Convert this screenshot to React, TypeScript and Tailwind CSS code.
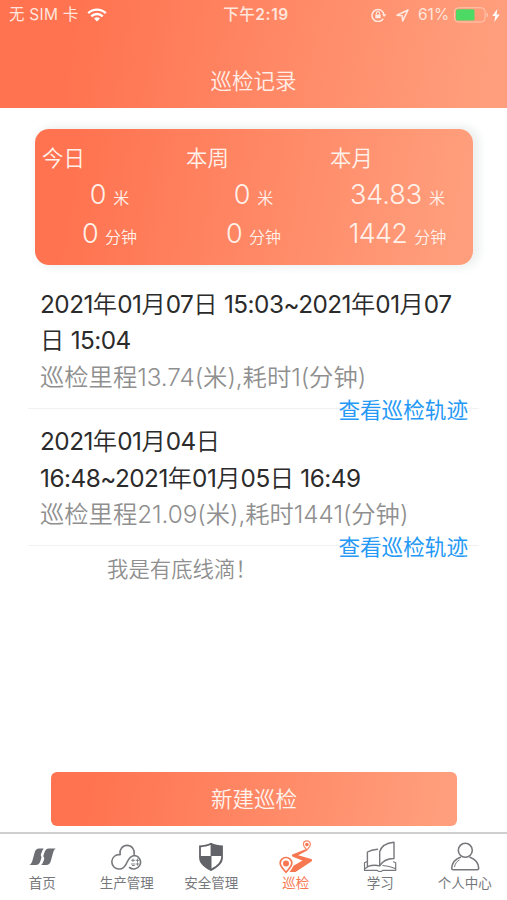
import React from "react";

const FONT = "font-['Inter','Noto_Sans_CJK_SC',sans-serif]";

// Latin runs are set slightly tighter than the Chinese characters around them.
function Mixed({ text, tight }: { text: string; tight: string }) {
  const parts = text.split(/([\x20-\x7e]+)/).filter(Boolean);
  return (
    <>
      {parts.map((p, i) =>
        /^[\x20-\x7e]+$/.test(p) ? (
          <span key={i} className={tight}>{p}</span>
        ) : (
          <span key={i}>{p}</span>
        )
      )}
    </>
  );
}

function StatusBar() {
  return (
    <div className="flex h-[30px] items-center text-[15.5px] leading-[30px] text-[#ffe5dc]">
      <div className="flex w-[200px] items-center pl-[9px]">
        <span className="whitespace-pre tracking-[0.25px]">无 SIM 卡</span>
        <svg width="20" height="14" viewBox="0 0 20 14" className="ml-[8px]" fill="none" stroke="white" strokeWidth="2.4">
          <path d="M1.2 5.2C6.2.4 13.8.4 18.8 5.2" />
          <path d="M4.3 8.3c3.2-3 8.2-3 11.4 0" />
          <path d="M7 10.4c1.8-1.5 4.2-1.5 6 0l-3 3z" fill="white" stroke="none" />
        </svg>
      </div>
      <div className="w-[112px] text-center tracking-[0.6px]">
        <span className="font-medium">下午</span>
        <span className="font-semibold">2:19</span>
      </div>
      <div className="flex flex-1 items-center justify-end pr-[7px]">
        <svg width="16" height="14" viewBox="0 0 16 14" fill="none" stroke="#ffe9e1" strokeWidth="1.5">
          <path d="M12.2 10.6A6 6 0 1 1 13 7" />
          <path d="M11 6.3h4.4L13.2 9z" fill="#ffe9e1" stroke="none" />
          <path d="M4.3 6.5h5.4v3.8H4.3z" fill="#ffe9e1" stroke="none" />
          <path d="M5.4 6.5V5.2a1.6 1.6 0 0 1 3.2 0v1.3" strokeWidth="1.1" />
        </svg>
        <svg width="13" height="13" viewBox="0 0 13 13" className="ml-[9px]" fill="none" stroke="#ffe9e1" strokeWidth="1.6" strokeLinejoin="round">
          <path d="M12 1 1 6.2l5.2.6.5 5.2z" />
        </svg>
        <span className="ml-[9px] w-[34px]">61%</span>
        <svg width="35" height="16" viewBox="0 0 35 16" className="ml-[2px]" fill="none">
          <rect x=".6" y=".8" width="30.5" height="14.2" rx="3.8" stroke="#ffc9b4" strokeWidth="1" />
          <rect x="2" y="2.3" width="18.5" height="11.2" rx="1.5" fill="#4cd964" />
          <path d="M32.6 5.5c1.9.5 1.9 4.3 0 4.8z" fill="#ffc9b4" />
        </svg>
        <svg width="8" height="13" viewBox="0 0 8 13" className="ml-[3px]" fill="white">
          <path d="M5.3 0 .3 7h3l-1 6L7.7 5.4H4.5z" />
        </svg>
      </div>
    </div>
  );
}

function Stat({ label, meters, minutes }: { label: string; meters: string; minutes: string }) {
  return (
    <div className="w-[144px] text-[#fff1ea]">
      <div className="h-[36px] pl-[7px] text-[21.4px] font-[350] leading-[36px]">{label}</div>
      <div className="h-[38.5px] pl-[5px] text-center text-[27px] font-[350] leading-[38px]">
        <span className="tracking-[-0.1px]">{meters}</span>
        <span className="ml-[7px] text-[16px] font-[350]">米</span>
      </div>
      <div className="h-[39px] pl-[5px] text-center text-[27px] font-[350] leading-[38px]">
        <span className="tracking-[-0.7px]">{minutes}</span>
        <span className="ml-[7px] text-[16px] font-[350]">分钟</span>
      </div>
    </div>
  );
}

function Entry({ lines, detail }: { lines: string[]; detail: string }) {
  return (
    <div className="relative mx-[28px] h-[137.5px] border-b border-[#f1f1f1] pl-[12px] pt-[14.5px] text-[24.3px] font-[350] leading-[36.5px]">
      {lines.map((l) => (
        <div key={l} className="whitespace-pre text-[#2b2b2b]">
          <Mixed text={l} tight="font-normal tracking-[-0.5px]" />
        </div>
      ))}
      <div className="whitespace-pre text-[#8f8f8f]">
        <Mixed text={detail} tight="tracking-[-0.05px]" />
      </div>
      <a className="absolute right-[11px] bottom-[-18px] text-[21.6px] font-normal leading-[32px] text-[#2599f5]">查看巡检轨迹</a>
    </div>
  );
}

const HomeIcon = () => (
  <svg width="28" height="32" viewBox="0 0 28 32" className="overflow-visible" fill="#6d6e73">
    <path d="M1.5 25C3.5 24 4 22 4.800 19.200L6.800 12Q7.800 8.700 11 8.500h4.700Q14.300 10 13.700 12.500C12.600 14.300 12.400 15.800 13.600 17l-1.200 4Q11.200 25 8 25z" />
    <path d="M27.700 8.500C25.900 9.700 25.400 11.500 24.800 13.700L22.800 21Q21.700 25 18.400 25H13.300Q14.900 23.500 15.400 21.200C16.500 19.200 16.600 17.600 15.200 16.300L16.500 12.200Q17.600 8.700 20.800 8.500z" />
  </svg>
);

const CloudIcon = () => (
  <svg width="32" height="32" viewBox="0 0 32 32" fill="none" stroke="#77787c" strokeWidth="1.6" strokeLinecap="round">
    <path d="M9.1 14.3A7.2 7.2 0 1 1 23.1 14.3" />
    <path d="M9.1 14.7A7.2 7.2 0 1 0 8.5 29C12 29 14 26.5 15.5 23.3C17.2 19.3 19.3 15.5 24 15.5A6.8 6.8 0 1 1 18.5 27.5" />
    <path d="M20.5 20.3h3M20.5 24h3M25 20.3h3M25 24h3M22 19v2.6M26.5 19v2.6M21.3 25.5h2M26.5 22.8v2.4" strokeWidth=".9" />
  </svg>
);

const ShieldIcon = () => (
  <svg width="28" height="32" viewBox="0 0 28 32">
    <path d="M14 2.7c3.8 2 7.5 2.7 11.9 2.8v12.2c0 6.5-6.6 10.6-11.9 13.3C8.7 28.3 2.1 24.2 2.1 17.7V5.5C6.5 5.4 10.2 4.7 14 2.7z" fill="#626369" />
    <path d="M3.9 7.2c3.6-.2 6.9-.9 9.7-2.1v11H3.9zM14.5 16.1h9.7c.1 6-4.2 9.5-9.7 12.5z" fill="white" />
  </svg>
);

const RouteIcon = () => (
  <svg width="34" height="34" viewBox="0 0 34 34">
    <path d="M26.5 9.3 13.3 14.6Q12.2 15.8 13.8 16.8L23.5 20.6 14.5 25.7Q12.5 29.7 10.5 32H16.5L33 20.9Q33.7 19.7 32.2 19L19.2 15.3 28.2 10.6z" fill="#f77750" />
    <path d="M7 32.3C3.8 28.5 1.2 26.3 1.2 23.3a5.8 5.8 0 0 1 11.6 0c0 3-2.6 5.2-5.8 9z" fill="white" stroke="#f77750" strokeWidth="1.7" />
    <circle cx="7" cy="23.5" r="3" fill="#f77750" />
    <path d="M27.9 9.8c-2-2.2-3.5-3.6-3.5-5.4a3.5 3.5 0 0 1 7 0c0 1.8-1.5 3.2-3.5 5.4z" fill="white" stroke="#f98766" strokeWidth="1.2" />
    <circle cx="27.9" cy="4.6" r="1.8" fill="#f77750" />
  </svg>
);

const BookIcon = () => (
  <svg width="34" height="32" viewBox="0 0 34 32" fill="none" stroke="#77787c" strokeWidth="1.4" strokeLinejoin="round" strokeLinecap="round">
    <path d="M14.5 9.2C10.3 9.5 7 10.4 4.4 12v14.6c4.3-1.4 8.3-1.7 12.1-.7M16.7 25.9V11.6C18.3 5.8 24 2.9 31 2.2v16.3c-6.3.2-11.6 2.4-14.3 7.4" />
    <path d="M4.3 21.5 1.5 22.8v7.6H14.2q2.8 2.4 5.6 0H32.7v-7.6l-2.2-1M2.2 28.5 5.2 26.500M20 25.5c4 .3 8.3 1.3 12.2 3" strokeWidth="1.2" />
  </svg>
);

const PersonIcon = () => (
  <svg width="32" height="32" viewBox="0 0 32 32" fill="none" stroke="#77787c" strokeWidth="1.6" strokeLinejoin="round">
    <circle cx="16.3" cy="10.3" r="7" />
    <path d="M12 17.1C6.3 19.1 3 23.2 2.7 28.2q0 1.6 1.5 1.6h24q1.5 0 1.5-1.6c-.3-5-3.6-9.1-9.3-11.1" />
    <path d="M5.5 27c.5-3.2 2.2-5.6 5-7.1" strokeWidth="1" />
  </svg>
);

const tabs = [
  { label: "首页", icon: <HomeIcon /> },
  { label: "生产管理", icon: <CloudIcon /> },
  { label: "安全管理", icon: <ShieldIcon /> },
  { label: "巡检", icon: <RouteIcon />, active: true },
  { label: "学习", icon: <BookIcon /> },
  { label: "个人中心", icon: <PersonIcon /> },
];

export default function App() {
  return (
    <div className={`flex h-[900px] w-[507px] flex-col overflow-hidden bg-white ${FONT}`}>
      <header className="h-[108px] bg-[linear-gradient(100deg,#ff7350_15%,#ff9e7c_95%)]">
        <StatusBar />
        <h1 className="pt-[34px] text-center text-[21.5px] font-[350] leading-[34px] text-[#ffeee7]">巡检记录</h1>
      </header>

      <section className="mx-[35px] mt-[21px] h-[136px] w-[438px] rounded-[14px] bg-[linear-gradient(100deg,#ff7350_10%,#ff9e7c_95%)] pt-[11px] shadow-[4px_0_8px_3px_#eef0f0]">
        <div className="flex">
          <Stat label="今日" meters="0" minutes="0" />
          <Stat label="本周" meters="0" minutes="0" />
          <Stat label="本月" meters="34.83" minutes="1442" />
        </div>
      </section>

      <main className="mt-[6px] flex-1">
        <Entry
          lines={["2021年01月07日 15:03~2021年01月07", "日 15:04"]}
          detail="巡检里程13.74(米),耗时1(分钟)"
        />
        <Entry
          lines={["2021年01月04日", "16:48~2021年01月05日 16:49"]}
          detail="巡检里程21.09(米),耗时1441(分钟)"
        />
        <p className="pl-[107px] pt-[6px] text-[21.4px] font-[350] leading-[34px] text-[#8f8f8f]">我是有底线滴！</p>
      </main>

      <button className="mx-[51px] mb-[6px] h-[54px] w-[406px] shrink-0 rounded-[6px] bg-[linear-gradient(100deg,#ff7350_10%,#ff9e7c_95%)] text-[21.5px] font-[350] text-[#fff3ee]">
        新建巡检
      </button>

      <nav className="flex h-[68px] shrink-0 border-t-2 border-[#cfcfcf]">
        {tabs.map((t) => (
          <div key={t.label} className={`flex w-[84.5px] flex-col items-center pt-[6px] text-[13.5px] leading-[20px] ${t.active ? "text-[#f77750]" : "text-[#77787c]"}`}>
            <div className="flex h-[33px] items-start justify-center">{t.icon}</div>
            {t.label}
          </div>
        ))}
      </nav>
    </div>
  );
}
